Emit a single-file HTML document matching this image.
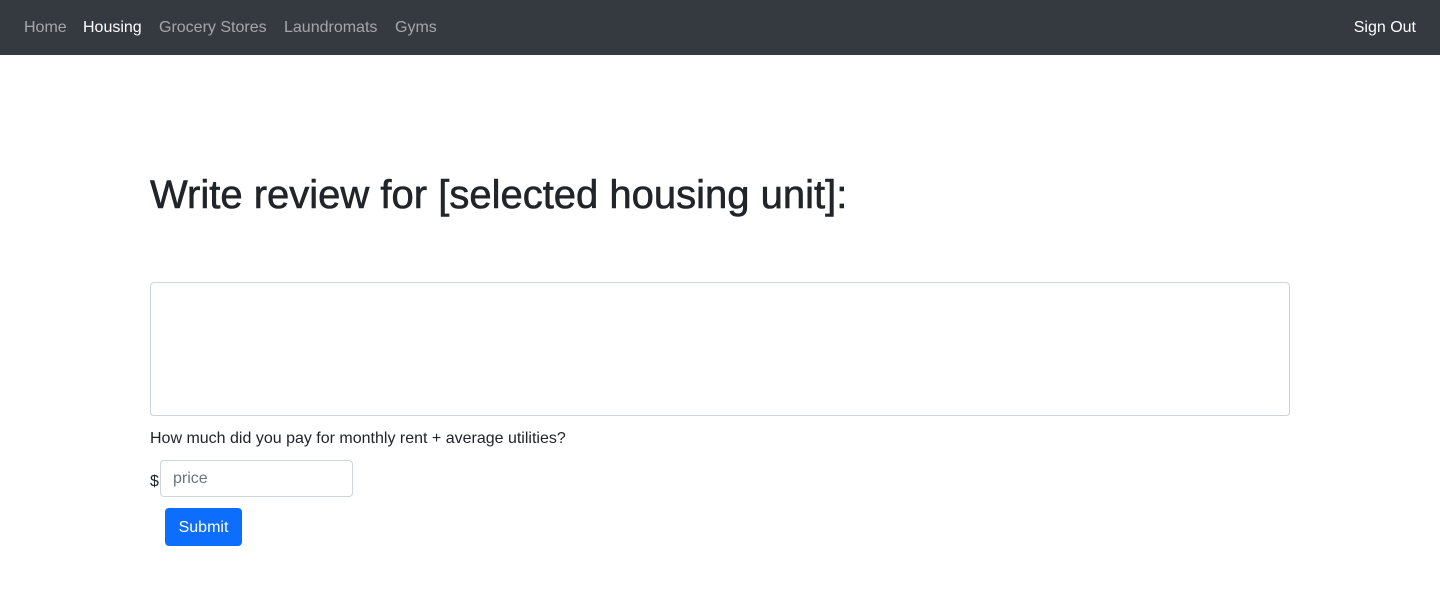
<!DOCTYPE html>
<html><head><style>
body{margin:0;font-family:"Liberation Sans",sans-serif;color:#212529;background:#fff;width:1440px;height:615px;position:relative;overflow:hidden}
nav{height:55px;background:#343a40;position:relative}
nav a{position:absolute;top:18px;font-size:16px;color:rgba(255,255,255,.55);text-decoration:none;line-height:19px}
h1{position:absolute;left:150px;top:172px;margin:0;font-size:40px;font-weight:500;line-height:46px;letter-spacing:0;-webkit-text-stroke:0.6px #212529}
.ta{position:absolute;left:150px;top:282px;width:1138px;height:132px;border:1px solid #ced4da;border-radius:4px}
.q{position:absolute;left:150px;top:429px;font-size:16px;line-height:19px}
.d{position:absolute;left:150px;top:473px;font-size:16px}
.in{position:absolute;left:160px;top:460px;width:193px;height:37px;border:1px solid #ced4da;border-radius:4px;font-size:16px;color:#6c757d;box-sizing:border-box;padding:9px 12px;line-height:18px}
.btn{position:absolute;left:165px;top:508px;width:77px;height:38px;background:#0d6efd;border-radius:4px;color:#fff;font-size:16px;text-align:center;line-height:39px}
</style></head><body>
<nav>
<a style="left:24px">Home</a>
<a style="left:83px;color:#fff">Housing</a>
<a style="left:159px">Grocery Stores</a>
<a style="left:284px">Laundromats</a>
<a style="left:395px">Gyms</a>
<a style="right:24px;color:#fff">Sign Out</a>
</nav>
<h1>Write review for [selected housing unit]:</h1>
<div class="ta"></div>
<div class="q">How much did you pay for monthly rent + average utilities?</div>
<div class="d">$</div>
<div class="in">price</div>
<div class="btn">Submit</div>
</body></html>
